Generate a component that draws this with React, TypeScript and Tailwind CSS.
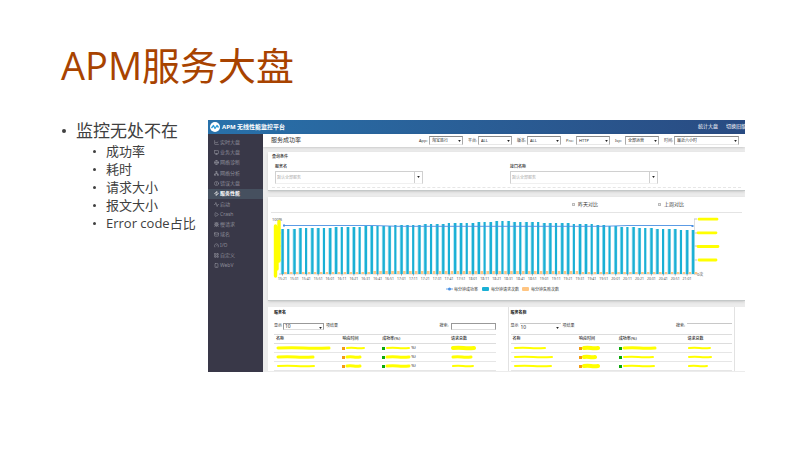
import React from "react";
import {
  ChartLine, Monitor, Globe, Network, CircleAlert, Zap, Activity, Play, Bug,
  Mail, Gauge, LayoutGrid, Smartphone,
} from "lucide-react";

const menu = [
  { label: "实时大盘", Icon: ChartLine },
  { label: "业务大盘", Icon: Monitor },
  { label: "网络诊断", Icon: Globe },
  { label: "网络分析", Icon: Network },
  { label: "错误大盘", Icon: CircleAlert },
  { label: "服务性能", Icon: Zap, active: true },
  { label: "启动", Icon: Activity },
  { label: "Crash", Icon: Play },
  { label: "慢请求", Icon: Bug },
  { label: "域名", Icon: Mail },
  { label: "I/O", Icon: Gauge },
  { label: "自定义", Icon: LayoutGrid },
  { label: "WebV", Icon: Smartphone },
];

const filters = [
  { id: "app", label: "App:", value: "淘宝旅行" },
  { id: "platform", label: "平台:", value: "ALL" },
  { id: "version", label: "版本:", value: "ALL" },
  { id: "protocol", label: "Pro:", value: "HTTP" },
  { id: "isp", label: "Isp:", value: "全部运营" },
  { id: "time", label: "时间:", value: "最近六小时", wide: true },
];

function Caret() {
  return (
    <svg viewBox="0 0 4 3" className="pointer-events-none absolute top-1 right-0.5 h-[2px] w-[3px]" aria-hidden="true">
      <path d="M0 0h4L2 3z" fill="#222" />
    </svg>
  );
}

function Filter({ id, label, value, wide }: { id: string; label: string; value: string; wide?: boolean }) {
  return (
    <div className="flex items-center">
      <label htmlFor={id} className="w-[10px] whitespace-nowrap text-[4px] text-[#333]">{label}</label>
      <div className={wide ? "relative w-[65px]" : "relative w-[34px]"}>
        <select id={id} className="block h-[9px] w-full appearance-none border border-t-[#888] border-r-[#aaa] border-b-[#e8e8e8] border-l-[#aaa] bg-white pl-0.5 text-[4px] leading-[7px] text-[#222]">
          <option>{value}</option>
        </select>
        <Caret />
      </div>
    </div>
  );
}

function Logo() {
  return (
    <svg viewBox="0 0 20 20" className="h-[10px] w-[10px]" aria-hidden="true">
      <circle cx="10" cy="10" r="10" fill="#fff" />
      <path d="M3 12l4-5 3 6 4-6 3 4" fill="none" stroke="#2b9bd8" strokeWidth="2.6" strokeLinejoin="round" />
    </svg>
  );
}

const LEVELS: [number, number][] = [
  [0, 32], [5, 31], [12, 30], [15, 29], [21, 28], [25, 27], [30, 26], [34, 25],
  [36, 24], [42, 25], [46, 26], [52, 27], [58, 30], [64, 32], [70, 33],
];

function barTop(i: number) {
  for (let k = 1; k < LEVELS.length; k++) {
    const [x0, y0] = LEVELS[k - 1];
    const [x1, y1] = LEVELS[k];
    if (i <= x1) return y0 + ((y1 - y0) * (i - x0)) / (x1 - x0);
  }
  return 33;
}

const bars = Array.from({ length: 70 }, (_, i) => ({ x: 13.5 + i * 5.95, top: Math.round(barTop(i)), i }));

function clock(i: number) {
  const m = 15 * 60 + 21 + i * 10;
  return `${Math.floor(m / 60)}:${String(m % 60).padStart(2, "0")}`;
}

function Chart() {
  return (
    <svg viewBox="0 0 477 86" className="block w-full" role="img" aria-label="每分钟请求成功率" fontFamily="'Noto Sans','Noto Sans CJK SC',sans-serif">
      <text x="4" y="8" fontSize="4" fill="#555">100%</text>
      {[6, 20, 33, 47, 61].map((y) => (
        <path key={y} d={`M11 ${y}h3M426 ${y}h3`} stroke="#999" strokeWidth="0.6" />
      ))}
      <path d="M13 61H427M426.5 6V61" stroke="#c8c8c8" strokeWidth="0.6" />
      {bars.map(({ x, top, i }) => (
        <g key={i}>
          {i % 3 !== 1 && <rect x={x - 0.8} y={top - 16} width="3.4" height={77 - top} fill="#a6e0ee" />}
          <rect x={x - (i % 3 === 1 ? 0.3 : 0)} y={top - 16} width="2.2" height={77 - top} fill="#1ab0d5" />
          <rect x={x + 2.6} y={i > 14 && i < 50 ? 58 : 59} width="2.6" height={i > 14 && i < 50 ? 3 : 2} fill="#ffc582" />
        </g>
      ))}
      <path d="M16 12.5H105L130 13.3H335L360 12.5H425" fill="none" stroke="#4a90e2" strokeWidth="0.9" />
      <rect x="15" y="11.5" width="2" height="2" fill="#4a90e2" />
      <rect x="423.5" y="12" width="2" height="2" fill="#4a90e2" />
      {Array.from({ length: 35 }, (_, i) => (
        <g key={i}>
          <path d={`M${14.5 + i * 11.9} 61v1.5`} stroke="#666" strokeWidth="0.6" />
          <text x={14.5 + i * 11.9} y="66.5" fontSize="3.5" textAnchor="middle" fill="#555">{clock(i)}</text>
        </g>
      ))}
      <path d="M7.5 13V63M11 8.5V48M9 15V56" stroke="#ff0" strokeWidth="3.4" strokeLinecap="round" />
      <path d="M431 6.2h18M430 19.8h18M430 33.5h20M431 47h17" stroke="#ff0" strokeWidth="2.8" strokeLinecap="round" />
      <text x="429" y="62.5" fontSize="4" fill="#555">0次</text>
      <g fontSize="4" fill="#333">
        <path d="M178 76h7" stroke="#4a90e2" strokeWidth="0.8" />
        <circle cx="181.5" cy="76" r="1.5" fill="#4a90e2" />
        <text x="186" y="77.5">每分钟成功率</text>
        <rect x="214" y="74" width="7" height="4" rx="1" fill="#1ab0d5" />
        <text x="223" y="77.5">每分钟请求次数</text>
        <rect x="254" y="74" width="7" height="4" rx="1" fill="#ffc582" />
        <text x="263" y="77.5">每分钟失败次数</text>
      </g>
    </svg>
  );
}

function Marker({ width, thick = 3 }: { width: number; thick?: number }) {
  const y = 3;
  return (
    <svg width={width} height="6" className="shrink-0" aria-hidden="true">
      <path
        d={`M2 ${y}Q${width * 0.3} ${y - 0.7} ${width * 0.5} ${y}T${width - 2} ${y}`}
        fill="none" stroke="#ff0" strokeWidth={thick} strokeLinecap="round"
      />
    </svg>
  );
}

type Row = { widths: number[]; thick: number[]; tail?: string };

function Panel({ id, title, rows, boxed }: { id: string; title: string; rows: Row[]; boxed?: boolean }) {
  return (
    <section className={boxed ? "flex-1 border-x border-[#e2e2e2] px-0.5" : "flex-1 pr-0.5"}>
      <h3 className="pt-[3px] text-[4px] leading-[5px] font-bold text-[#222]">{title}</h3>
      <div className="mt-[7px] flex h-[8px] items-center justify-between text-[4px] text-[#333]">
        <div className="flex items-center gap-px">
          <label htmlFor={id + "-size"}>显示</label>
          <div className="relative w-[41px]">
            <select id={id + "-size"} className={boxed
              ? "block h-[7px] w-full appearance-none border-t border-[#c8c8c8] bg-white pl-px text-[5px] leading-[6px]"
              : "block h-[7px] w-full appearance-none border border-[#999] border-b-[#ddd] bg-white pl-px text-[5px] leading-[5px]"}>
              <option>10</option>
            </select>
            <Caret />
          </div>
          <span className="pl-px">项结果</span>
        </div>
        <div className="flex items-center gap-0.5">
          <label htmlFor={id + "-search"}>搜索:</label>
          <input id={id + "-search"} className={boxed
            ? "h-[7px] w-[45px] border-t border-[#c8c8c8] text-[4px]"
            : "h-[7px] w-[45px] border border-[#999] border-b-[#ddd] text-[4px]"} />
        </div>
      </div>
      <table className="mt-[4px] w-full table-fixed border-t border-[#ddd] text-left text-[4px] leading-[8px] text-[#222]">
        <colgroup>
          <col className="w-[30%]" />
          <col className="w-[18%]" />
          <col className="w-[31%]" />
          <col className="w-[21%]" />
        </colgroup>
        <thead>
          <tr className="border-b border-[#ddd]">
            {["名称", "响应时间", "成功率(%)", "请求总数"].map((h) => (
              <th key={h} className="h-[9px] p-0 pl-0.5 font-medium">{h}</th>
            ))}
          </tr>
        </thead>
        <tbody>
          {rows.map((r, n) => (
            <tr key={n} className="border-b border-[#e6e6e6]">
              {r.widths.map((w, c) => (
                <td key={c} className="h-[9px] p-0 pl-0.5">
                  <div className="flex h-[8px] items-center">
                    {c === 1 && <span className="h-[3px] w-[3px] bg-[#f39c12]" />}
                    {c === 2 && <span className="h-[3px] w-[3px] bg-[#0aa80a]" />}
                    <Marker width={w} thick={r.thick[c]} />
                    {c === 2 && r.tail && <span>{r.tail}</span>}
                  </div>
                </td>
              ))}
            </tr>
          ))}
        </tbody>
      </table>
    </section>
  );
}

const serviceRows: Row[] = [
  { widths: [55, 21, 26, 25], thick: [3, 2, 2, 4], tail: "%)" },
  { widths: [39, 17, 26, 22], thick: [3, 3, 3, 3], tail: "%)" },
  { widths: [40, 17, 26, 24], thick: [2, 3, 3, 2], tail: "%)" },
];

const apiRows: Row[] = [
  { widths: [34, 18, 35, 25], thick: [2, 4, 3, 2] },
  { widths: [41, 15, 33, 26], thick: [2, 4, 2, 2] },
  { widths: [40, 18, 34, 22], thick: [2, 4, 2, 2] },
];

function Combo({ id, label }: { id: string; label: string }) {
  return (
    <div>
      <label htmlFor={id} className="block text-[4px] leading-[6px] font-medium text-[#222]">{label}</label>
      <div className="relative mt-px flex h-[13px] w-[148px] border border-[#d0d0d0] border-b-[#f0f0f0]">
        <input id={id} placeholder="默认全部服务" className="min-w-0 flex-1 border-r border-[#d0d0d0] pl-px text-[4px] placeholder:text-[#aaa]" />
        <button type="button" aria-label="展开" className="w-[7px]"><Caret /></button>
      </div>
    </div>
  );
}

function Dashboard() {
  return (
    <div className="flex h-[252px] min-w-0 flex-1 flex-col overflow-hidden bg-[#ececec] font-['Noto_Sans','Noto_Sans_CJK_SC',sans-serif]">
      <header className="flex h-[14px] shrink-0 items-center bg-linear-to-r from-[#2871aa] to-[#294b82] pl-0.5 text-white">
        <Logo />
        <h2 className="flex-1 pl-0.5 text-[6px] font-bold whitespace-nowrap">APM 无线性能监控平台</h2>
        <nav className="flex gap-2 text-[5px] whitespace-nowrap">
          <a href="#stats">统计大盘</a>
          <a href="#old" className="w-[19px] overflow-hidden">切换旧版</a>
        </nav>
      </header>
      <div className="flex min-h-0 flex-1">
        <nav className="w-[55px] shrink-0 bg-[#393848] pt-[3px]">
          <ul className="flex h-[134px] flex-col">
            {menu.map(({ label, Icon, active }) => (
              <li key={label} className="flex flex-1">
                <a href={"#" + label} className={active
                  ? "flex flex-1 items-center gap-px bg-[#46505f] pl-[6px] text-[5px] leading-none font-bold text-white"
                  : "flex flex-1 items-center gap-px pl-[6px] text-[5px] leading-none text-[#8d8d98]"}>
                  <Icon size={5} strokeWidth={3} />
                  {label}
                </a>
              </li>
            ))}
          </ul>
        </nav>
        <main className="min-w-0 flex-1">
          <div className="flex h-[13px] items-center justify-between bg-white pr-1.5 pl-2 shadow-sm">
            <h3 className="text-[6px] whitespace-nowrap text-[#333]">服务成功率</h3>
            <div className="flex gap-[5px]">
              {filters.map((f) => <Filter key={f.id} {...f} />)}
            </div>
          </div>
          <div className="flex flex-col gap-1.5 pt-[5px] pl-[5px]">
            <section className="h-[39px] border-b border-[#c4c8c8] bg-white px-1 shadow-sm">
              <h3 className="pt-0.5 text-[4px] leading-[6px] font-medium text-[#333]">查询条件</h3>
              <div className="mt-1 grid grid-cols-2 gap-1 border-b border-dashed border-[#e6e6e6] pb-[3px] pl-[3px]">
                <Combo id="service" label="服务名" />
                <Combo id="api" label="接口名称" />
              </div>
            </section>
            <section className="h-[104px] border-b border-[#c4c8c8] bg-white shadow-sm">
              <div className="mx-[3px] flex h-[16px] items-center justify-end gap-[60px] border-b border-[#e4e4e4] pr-[58px] text-[5px] text-[#333]">
                {["昨天对比", "上周对比"].map((t) => (
                  <label key={t} className="flex items-center gap-[3px]">
                    <input type="checkbox" className="h-[3px] w-[3px] appearance-none border border-[#bbb] bg-[#eee]" />
                    {t}
                  </label>
                ))}
              </div>
              <Chart />
            </section>
            <section className="flex gap-[10px] bg-white pr-[10px] pl-[6px]">
              <Panel id="service-table" title="服务名" rows={serviceRows} />
              <Panel id="api-table" title="服务名称" rows={apiRows} boxed />
            </section>
          </div>
        </main>
      </div>
    </div>
  );
}

export default function App() {
  return (
    <div className="min-h-screen bg-white pt-[39px] pr-[55px] pl-[61px] font-['Open_Sans','Noto_Sans_CJK_SC',sans-serif]">
      <h1 className="text-[38px] leading-[52px] text-[#a84300]">APM服务大盘</h1>
      <div className="mt-[29px] flex">
        <ul className="w-[147px] shrink-0 text-[#404040]">
          <li>
            <div className="flex items-center text-[17px] leading-[22px] whitespace-nowrap">
              <span className="mr-[10px] ml-px h-1 w-1 rounded-full bg-[#404040]" />
              监控无处不在
            </div>
            <ul className="pl-8 text-[13px] leading-[18px] whitespace-nowrap">
              {["成功率", "耗时", "请求大小", "报文大小", "Error code占比"].map((t) => (
                <li key={t} className="flex items-center">
                  <span className="mr-[10px] h-[3px] w-[3px] rounded-full bg-[#404040]" />
                  {t}
                </li>
              ))}
            </ul>
          </li>
        </ul>
        <Dashboard />
      </div>
    </div>
  );
}
